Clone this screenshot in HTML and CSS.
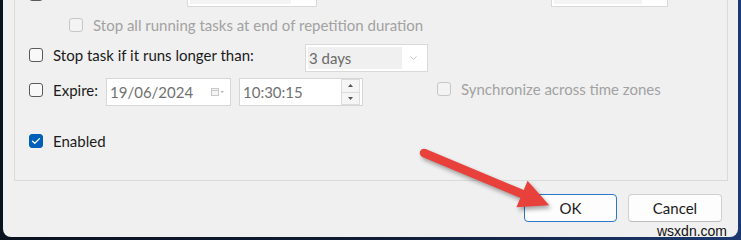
FILE: index.html
```html
<!DOCTYPE html>
<html>
<head>
<meta charset="utf-8">
<link rel="stylesheet" href="styles.css">
</head>
<body>
<div class="window">
  <div class="group">
    <div class="row row-a">
      <label class="opt opt-repeat"><span class="chk"></span><span class="lbl">Repeat task every:</span></label>
      <div class="combo combo-a"><span class="combo-field">1 hour</span><span class="combo-btn"></span></div>
      <span class="lbl lbl-dur">for a duration of:</span>
      <div class="combo combo-b"><span class="combo-field">1 day</span><span class="combo-btn"></span></div>
    </div>
    <div class="row row-b">
      <label class="opt disabled"><span class="chk"></span><span class="lbl">Stop all running tasks at end of repetition duration</span></label>
    </div>
    <div class="row row-c">
      <label class="opt opt-stop"><span class="chk"></span><span class="lbl">Stop task if it runs longer than:</span></label>
      <div class="combo combo-days"><span class="combo-field">3 days</span><span class="combo-btn"><svg width="7" height="4" viewBox="0 0 7 4"><polyline points="0.5,0.5 3.5,3.5 6.5,0.5" fill="none" stroke="#c4c4c4" stroke-width="1"/></svg></span></div>
    </div>
    <div class="row row-d">
      <label class="opt opt-expire"><span class="chk"></span><span class="lbl">Expire:</span></label>
      <div class="field date-field"><span class="field-text">19/06/2024</span>
        <span class="cal-icon"><svg width="14" height="8" viewBox="0 0 14 8"><rect x="0.5" y="0.5" width="7" height="7" fill="#f4f4f4" stroke="#c9c9c9"/><line x1="1" y1="2.5" x2="7" y2="2.5" stroke="#c9c9c9"/><polygon points="9.5,3 13,3 11.25,5" fill="#b5b5b5"/></svg></span>
      </div>
      <div class="field time-field"><span class="field-text">10:30:15</span>
        <span class="spin">
          <span class="spin-btn"><svg width="5" height="3" viewBox="0 0 5 3"><polygon points="0,3 5,3 2.5,0" fill="#555"/></svg></span>
          <span class="spin-btn"><svg width="5" height="3" viewBox="0 0 5 3"><polygon points="0,0 5,0 2.5,3" fill="#555"/></svg></span>
        </span>
      </div>
      <label class="opt disabled opt-sync"><span class="chk"></span><span class="lbl">Synchronize across time zones</span></label>
    </div>
    <div class="row row-e">
      <label class="opt"><span class="chk checked"><svg width="10" height="8" viewBox="0 0 10 8"><polyline points="1.5,4.2 3.8,6.3 8.5,1.6" fill="none" stroke="#ffffff" stroke-width="1.3" stroke-linecap="round" stroke-linejoin="round"/></svg></span><span class="lbl">Enabled</span></label>
    </div>
  </div>
  <div class="buttons">
    <button class="btn btn-default">OK</button>
    <button class="btn btn-cancel">Cancel</button>
  </div>
</div>
<svg class="arrow" width="741" height="240" viewBox="0 0 741 240">
  <g class="arrow-shape">
    <line x1="424" y1="153" x2="521" y2="193.5" stroke="#e8413b" stroke-width="8.5" stroke-linecap="round"/>
    <polygon points="549.2,205.3 527.6,180.8 516.4,207.2" fill="#e8413b"/>
  </g>
</svg>
<div class="watermark">wsxdn.com</div>
</body>
</html>
```
FILE: styles.css
```css
* { box-sizing: border-box; }
html, body { margin: 0; padding: 0; }
body {
  width: 741px;
  height: 240px;
  overflow: hidden;
  position: relative;
  background: linear-gradient(90deg, #0a1220 0%, #101c33 50%, #1c3a72 100%);
  font-family: Lato, "Noto Sans", sans-serif;
  font-size: 15px;
  color: #1b1b1b;
}
.window {
  margin-left: 3px;
  width: 735px;
  height: 237px;
  background: #f0f0f0;
  border-radius: 0 0 8px 8px;
  overflow: hidden;
  display: flex;
  flex-direction: column;
}
.group {
  margin: -30px 10px 0 11px;
  height: 211px;
  flex: none;
  border: 1px solid #dadada;
  padding-left: 14px;
}
.row { display: flex; align-items: flex-start; }
.row-a { height: 37px; }
.row-b { height: 34px; padding-left: 40px; }
.row-c { height: 32px; }
.row-d { height: 36px; }
.row-e { height: 70px; }

.opt { display: flex; align-items: center; flex: none; }
.lbl { line-height: 20px; white-space: nowrap; }
.chk {
  width: 14px;
  height: 14px;
  flex: none;
  border: 1px solid #5a5a5a;
  border-radius: 3px;
  background: #f8f8f8;
  margin-right: 10px;
  display: flex;
  align-items: center;
  justify-content: center;
}
.chk.checked { background: #005fb8; border-color: #005fb8; }
.disabled .chk { border-color: #c7c7c7; background: #f3f3f3; }
.disabled .lbl { color: #a2a2a2; }

.row-a .opt { margin-top: 13px; width: 158px; }
.row-a .opt .lbl { position: relative; top: -3px; }
.row-b .opt { margin-top: 7px; }
.row-c .opt { margin-top: 3px; width: 276px; }
.row-d .opt-expire { margin-top: 6px; width: 77px; }
.row-d .opt-sync { margin-top: 5px; margin-left: 74px; }
.row-e .opt { margin-top: 21px; }

.combo {
  height: 28px;
  flex: none;
  border: 1px solid #d9d9d9;
  background: #ffffff;
  display: flex;
  padding: 2px;
}
.combo-field {
  flex: 1;
  background: #f0f0f0;
  color: #6a6a6a;
  padding-left: 1px;
  line-height: 22px;
}
.combo-btn { width: 23px; display: flex; align-items: center; justify-content: center; }
.combo-a { width: 130px; margin-top: 8px; }
.combo-a .combo-field, .combo-b .combo-field { background: #f4f4f4; color: #1b1b1b; line-height: 19px; }
.lbl-dur { width: 234px; margin-top: 8px; padding-left: 100px; }
.combo-b { width: 117px; margin-top: 8px; }
.combo-days { width: 123px; margin-top: 2px; }

.field {
  height: 28px;
  flex: none;
  margin-top: 4px;
  border: 1px solid #d6d6d6;
  background: #ffffff;
  display: flex;
  align-items: center;
  padding-left: 3px;
}
.field-text { flex: 1; color: #717171; line-height: 20px; }
.date-field { width: 125px; padding-right: 5px; }
.cal-icon { display: flex; }
.time-field { width: 124px; margin-left: 8px; padding-right: 2px; }
.spin { display: flex; flex-direction: column; width: 19px; height: 26px; }
.spin-btn {
  flex: 1;
  border: 1px solid #dcdcdc;
  background: #f5f5f5;
  display: flex;
  align-items: center;
  justify-content: center;
}
.spin-btn + .spin-btn { border-top: none; }

.buttons {
  display: flex;
  justify-content: flex-end;
  gap: 11px;
  margin-top: 13px;
  padding-right: 16px;
}
.btn {
  height: 28px;
  width: 93px;
  border: 1px solid #d0d0d0;
  border-bottom-color: #bdbdbd;
  border-radius: 4px;
  background: #fdfdfd;
  font-family: Lato, "Noto Sans", sans-serif;
  font-size: 15px;
  color: #1b1b1b;
  padding: 0;
}
.btn-default { border-color: #2a78cc; }
.btn-cancel { width: 94px; }

.arrow {
  position: absolute;
  left: 0;
  top: 0;
  pointer-events: none;
}
.arrow-shape { filter: drop-shadow(2px 3px 2px rgba(0, 0, 0, 0.35)); }
.watermark {
  position: absolute;
  left: 657px;
  top: 223px;
  font-family: "Liberation Sans", Arial, sans-serif;
  font-size: 14px;
  line-height: 16px;
  color: #111;
}
```
